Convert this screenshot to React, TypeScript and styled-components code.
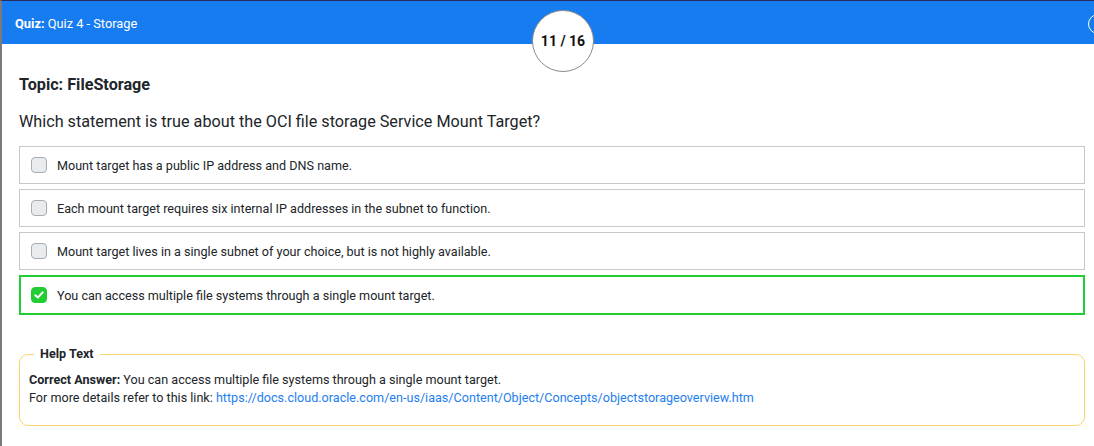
import React from "react";
import styled, { createGlobalStyle } from "styled-components";

const Global = createGlobalStyle`
  html, body { margin: 0; padding: 0; background: #fff; }
  body { font-family: Roboto, "Liberation Sans", Arial, sans-serif; color: #212529; overflow: hidden; }
  * { box-sizing: border-box; }
`;

const Page = styled.div`
  width: 1094px;
  height: 446px;
  border-left: 2px solid #7a7a7a;
  border-top: 1px solid #2b2b5c;
  overflow: hidden;
  position: relative;
`;

const Header = styled.header`
  height: 43px;
  background: #177cf0;
  color: #fff;
  display: flex;
  align-items: center;
  justify-content: space-between;
  padding-left: 13px;
  font-size: 12.8px;
  position: relative;
`;

const Title = styled.div`
  margin-top: 2px;
  b { font-weight: 700; }
`;

const HeaderIcon = styled.div`
  width: 20px;
  height: 20px;
  border: 1.5px solid #fff;
  border-radius: 50%;
  margin-right: -14px;
  margin-top: 2px;
`;

const Counter = styled.div`
  position: absolute;
  left: 530px;
  top: 9px;
  width: 62px;
  height: 62px;
  border-radius: 50%;
  background: #fff;
  border: 1px solid #8a8a8a;
  display: flex;
  align-items: center;
  justify-content: center;
  font-weight: 700;
  font-size: 14px;
  color: #111;
  z-index: 2;
`;

const Body = styled.main`
  padding: 31px 9px 0 17px;
  display: flex;
  flex-direction: column;
`;

const Topic = styled.h2`
  margin: 0;
  font-size: 16.2px;
  font-weight: 700;
  line-height: 20px;
  color: #212529;
`;

const Question = styled.h3`
  margin: 16px 0 0;
  font-size: 16.2px;
  font-weight: 400;
  line-height: 22px;
  color: #212529;
`;

const Options = styled.div`
  margin-top: 13px;
  display: flex;
  flex-direction: column;
  gap: 5px;
`;

const Option = styled.label<{ $correct?: boolean }>`
  display: flex;
  align-items: center;
  gap: 10px;
  height: ${(p) => (p.$correct ? "40px" : "38px")};
  border: ${(p) => (p.$correct ? "2px solid #22cc33" : "1px solid #c8c8c8")};
  padding-left: ${(p) => (p.$correct ? "10px" : "11px")};
  font-size: 12.6px;
  color: #212529;
`;

const Box = styled.span<{ $checked?: boolean }>`
  width: 16px;
  height: 16px;
  border-radius: 4px;
  border: 1px solid ${(p) => (p.$checked ? "#22cc33" : "#a9adb2")};
  background: ${(p) => (p.$checked ? "#22cc33" : "#e9ecef")};
  display: flex;
  align-items: center;
  justify-content: center;
  flex: none;
`;

const Help = styled.fieldset`
  margin: 30px 0 0;
  border: 1px solid #fbd66a;
  border-radius: 9px;
  padding: 8px 9px 18px;
  font-size: 12.6px;
  line-height: 18px;
  color: #212529;
`;

const Legend = styled.legend`
  font-weight: 700;
  font-size: 12.6px;
  padding: 0 6px;
  margin-left: 5px;
`;

const Link = styled.a`
  color: #1e7ef0;
  text-decoration: none;
`;

const options = [
  "Mount target has a public IP address and DNS name.",
  "Each mount target requires six internal IP addresses in the subnet to function.",
  "Mount target lives in a single subnet of your choice, but is not highly available.",
  "You can access multiple file systems through a single mount target.",
];

export default function App() {
  return (
    <>
      <Global />
      <Page>
        <Header>
          <Title>
            <b>Quiz:</b> Quiz 4 - Storage
          </Title>
          <HeaderIcon />
        </Header>
        <Counter>11 / 16</Counter>
        <Body>
          <Topic>Topic: FileStorage</Topic>
          <Question>Which statement is true about the OCI file storage Service Mount Target?</Question>
          <Options>
            {options.map((o, i) => {
              const correct = i === 3;
              return (
                <Option key={i} $correct={correct}>
                  <Box $checked={correct}>
                    {correct && (
                      <svg width="10" height="8" viewBox="0 0 10 8">
                        <path d="M1.3 4.2 L3.8 6.5 L8.7 1.4" fill="none" stroke="#fff" strokeWidth="2" strokeLinecap="round" strokeLinejoin="round" />
                      </svg>
                    )}
                  </Box>
                  {o}
                </Option>
              );
            })}
          </Options>
          <Help>
            <Legend>Help Text</Legend>
            <div>
              <b>Correct Answer:</b> You can access multiple file systems through a single mount target.
            </div>
            <div>
              For more details refer to this link:{" "}
              <Link href="#">https://docs.cloud.oracle.com/en-us/iaas/Content/Object/Concepts/objectstorageoverview.htm</Link>
            </div>
          </Help>
        </Body>
      </Page>
    </>
  );
}
